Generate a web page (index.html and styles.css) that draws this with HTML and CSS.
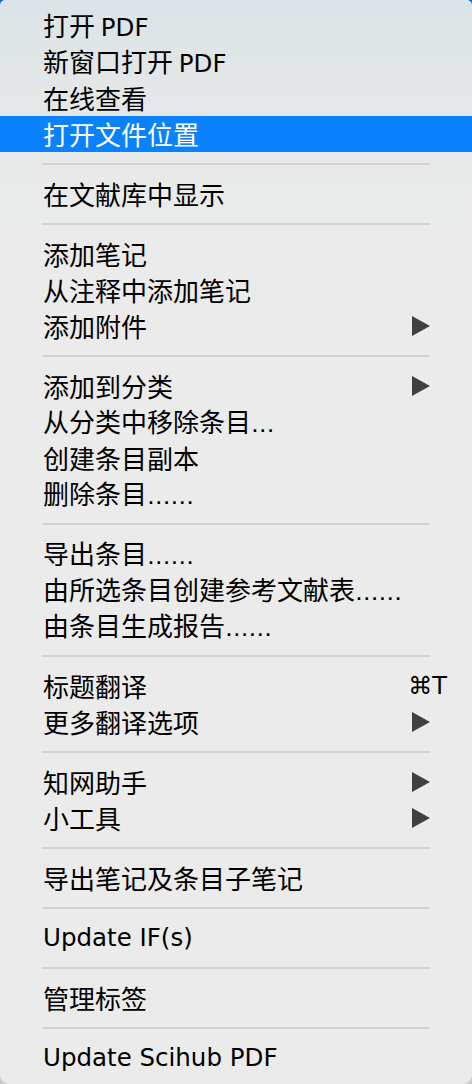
FILE: index.html
```html
<!DOCTYPE html>
<html lang="zh">
<head>
<meta charset="utf-8">
<link rel="stylesheet" href="styles.css">
</head>
<body>
<div class="menu">
  <div class="item"><span class="label">打开 <span class="latin">PDF</span></span></div>
  <div class="item"><span class="label">新窗口打开 <span class="latin">PDF</span></span></div>
  <div class="item"><span class="label">在线查看</span></div>
  <div class="item active"><span class="label">打开文件位置</span></div>
  <div class="sep"></div>
  <div class="item"><span class="label">在文献库中显示</span></div>
  <div class="sep"></div>
  <div class="item"><span class="label">添加笔记</span></div>
  <div class="item"><span class="label">从注释中添加笔记</span></div>
  <div class="item"><span class="label">添加附件</span><span class="arrow"></span></div>
  <div class="sep"></div>
  <div class="item"><span class="label">添加到分类</span><span class="arrow"></span></div>
  <div class="item"><span class="label">从分类中移除条目<span class="dots">…</span></span></div>
  <div class="item"><span class="label">创建条目副本</span></div>
  <div class="item"><span class="label">删除条目<span class="dots">……</span></span></div>
  <div class="sep"></div>
  <div class="item"><span class="label">导出条目<span class="dots">……</span></span></div>
  <div class="item"><span class="label">由所选条目创建参考文献表<span class="dots">……</span></span></div>
  <div class="item"><span class="label">由条目生成报告<span class="dots">……</span></span></div>
  <div class="sep"></div>
  <div class="item"><span class="label">标题翻译</span><span class="shortcut">⌘T</span></div>
  <div class="item"><span class="label">更多翻译选项</span><span class="arrow"></span></div>
  <div class="sep"></div>
  <div class="item"><span class="label">知网助手</span><span class="arrow"></span></div>
  <div class="item"><span class="label">小工具</span><span class="arrow"></span></div>
  <div class="sep"></div>
  <div class="item"><span class="label">导出笔记及条目子笔记</span></div>
  <div class="sep"></div>
  <div class="item"><span class="label latin">Update IF(s)</span></div>
  <div class="sep"></div>
  <div class="item"><span class="label">管理标签</span></div>
  <div class="sep"></div>
  <div class="item"><span class="label latin">Update Scihub PDF</span></div>
</div>
</body>
</html>
```
FILE: styles.css
```css
html {
  background: linear-gradient(#0a64d8 0, #0a64d8 40px, #c9c9c9 41px, #c9c9c9 100%);
  height: 100%;
}
body {
  margin: 0;
  height: 100%;
}
.menu {
  box-sizing: border-box;
  height: 1084px;
  padding-top: 8px;
  background: linear-gradient(#dbe4e7 0, #e3e7e8 90px, #e9eaea 180px, #ebebeb 300px, #ebebeb 100%);
  border-radius: 5px 5px 9px 9px;
  font-family: "Noto Sans CJK SC", "DejaVu Sans", sans-serif;
  font-size: 26px;
  color: #000;
}
.item {
  display: flex;
  align-items: center;
  height: 36px;
  padding: 0 42px 0 43px;
  line-height: 36px;
  white-space: nowrap;
}
.item.active {
  background: #0a82fd;
  color: #fff;
}
.label {
  flex: 1;
}
.latin {
  font-family: "DejaVu Sans", sans-serif;
  font-size: 24.5px;
}
.dots {
  font-family: "DejaVu Sans", sans-serif;
  font-size: 23.5px;
}
.shortcut {
  font-family: "DejaVu Sans", sans-serif;
  font-size: 24px;
  margin-right: -17px;
}
.arrow {
  width: 0;
  height: 0;
  border-style: solid;
  border-width: 10px 0 10px 18px;
  border-color: transparent transparent transparent #404040;
}
.sep {
  height: 2px;
  margin: 11px 42px;
  background: #d3d3d3;
}
```
